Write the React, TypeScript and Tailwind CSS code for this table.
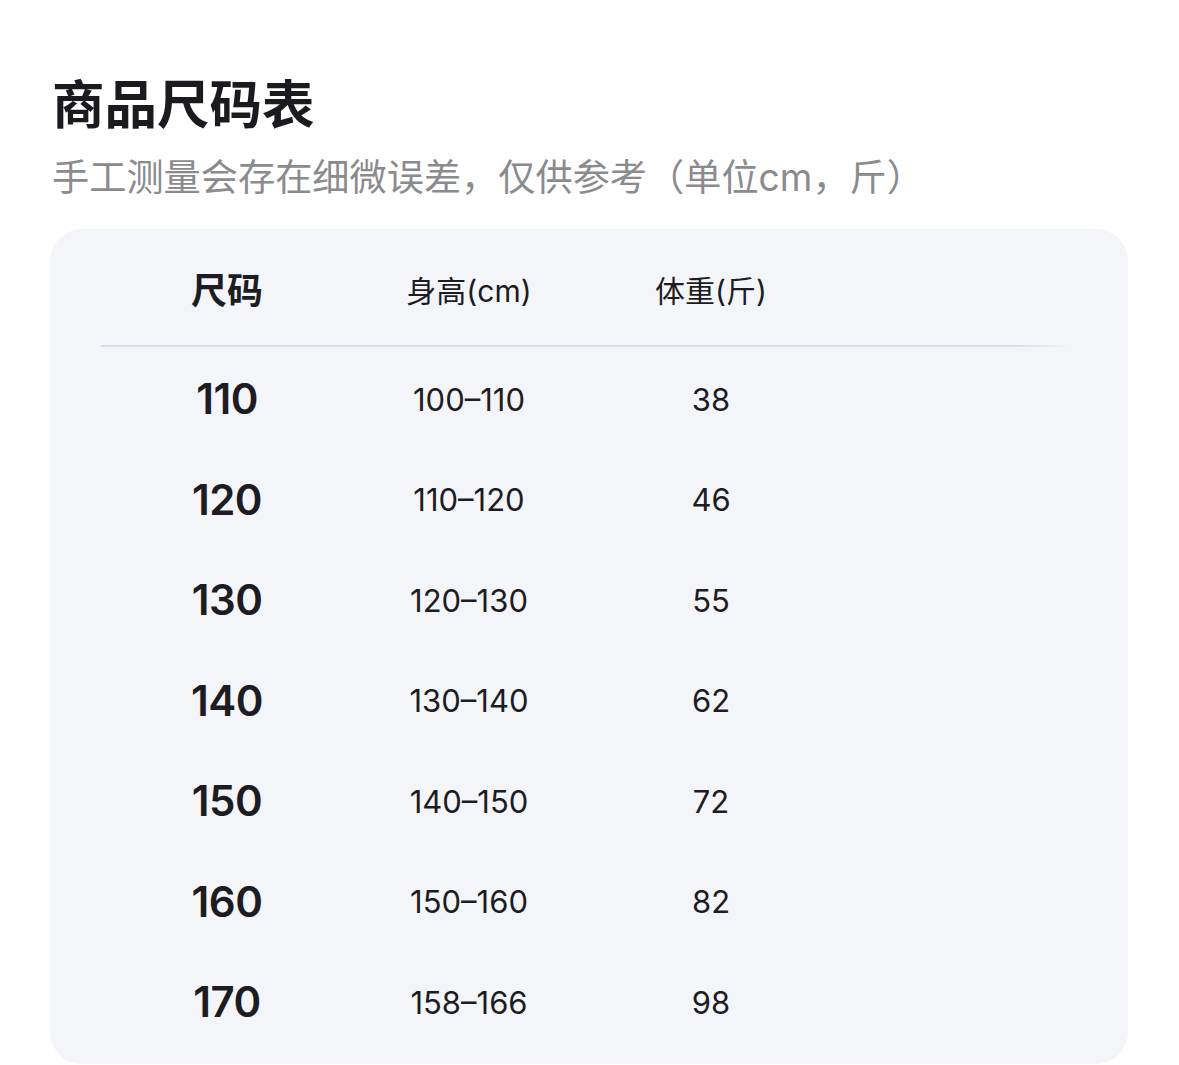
import React from "react";

const rows = [
  ["110", "100–110", "38"],
  ["120", "110–120", "46"],
  ["130", "120–130", "55"],
  ["140", "130–140", "62"],
  ["150", "140–150", "72"],
  ["160", "150–160", "82"],
  ["170", "158–166", "98"],
];

const font = { fontFamily: 'Inter, "Noto Sans CJK SC", sans-serif' };

export default function App() {
  return (
    <div className="w-[1179px] h-[1065px] bg-white overflow-hidden" style={font}>
      <div className="pl-[50px] pr-[51px]">
        <h1 className="mt-[79px] h-[52px] leading-[52px] text-[52.5px] font-semibold text-[#1a1a1f] pl-[2px]">
          商品尺码表
        </h1>
        <p className="mt-[29px] h-[36px] leading-[36px] text-[37.2px] text-[#8b8b8e] pl-[2px] whitespace-nowrap">
          手工测量会存在细微误差，仅供参考（单位cm，斤）
        </p>
        <div className="mt-[33px] bg-[#f4f5f9] rounded-[32px] h-[835px] pb-[14px]">
          <div className="pt-[8px] h-[116px] flex items-center pl-[56px] text-[#1c1c22]">
            <div className="w-[242px] text-center text-[36px] font-semibold leading-none">尺码</div>
            <div className="w-[242px] text-center text-[30px] leading-none">身高(cm)</div>
            <div className="w-[242px] text-center text-[30px] leading-none">体重(斤)</div>
          </div>
          <div className="ml-[51px] mr-[56px] h-[2px] bg-[linear-gradient(to_right,#dcdde2_94%,rgba(220,221,226,0))]" />
          <div className="flex flex-col pt-[2px]">
            {rows.map((r) => (
              <div key={r[0]} className="h-[100.5px] flex items-center pl-[56px] text-[#1c1c22]">
                <div className="w-[242px] text-center text-[42px] font-semibold leading-none tracking-[-0.5px]">{r[0]}</div>
                <div className="w-[242px] text-center text-[31px] leading-none">{r[1]}</div>
                <div className="w-[242px] text-center text-[31px] leading-none">{r[2]}</div>
              </div>
            ))}
          </div>
        </div>
      </div>
    </div>
  );
}
